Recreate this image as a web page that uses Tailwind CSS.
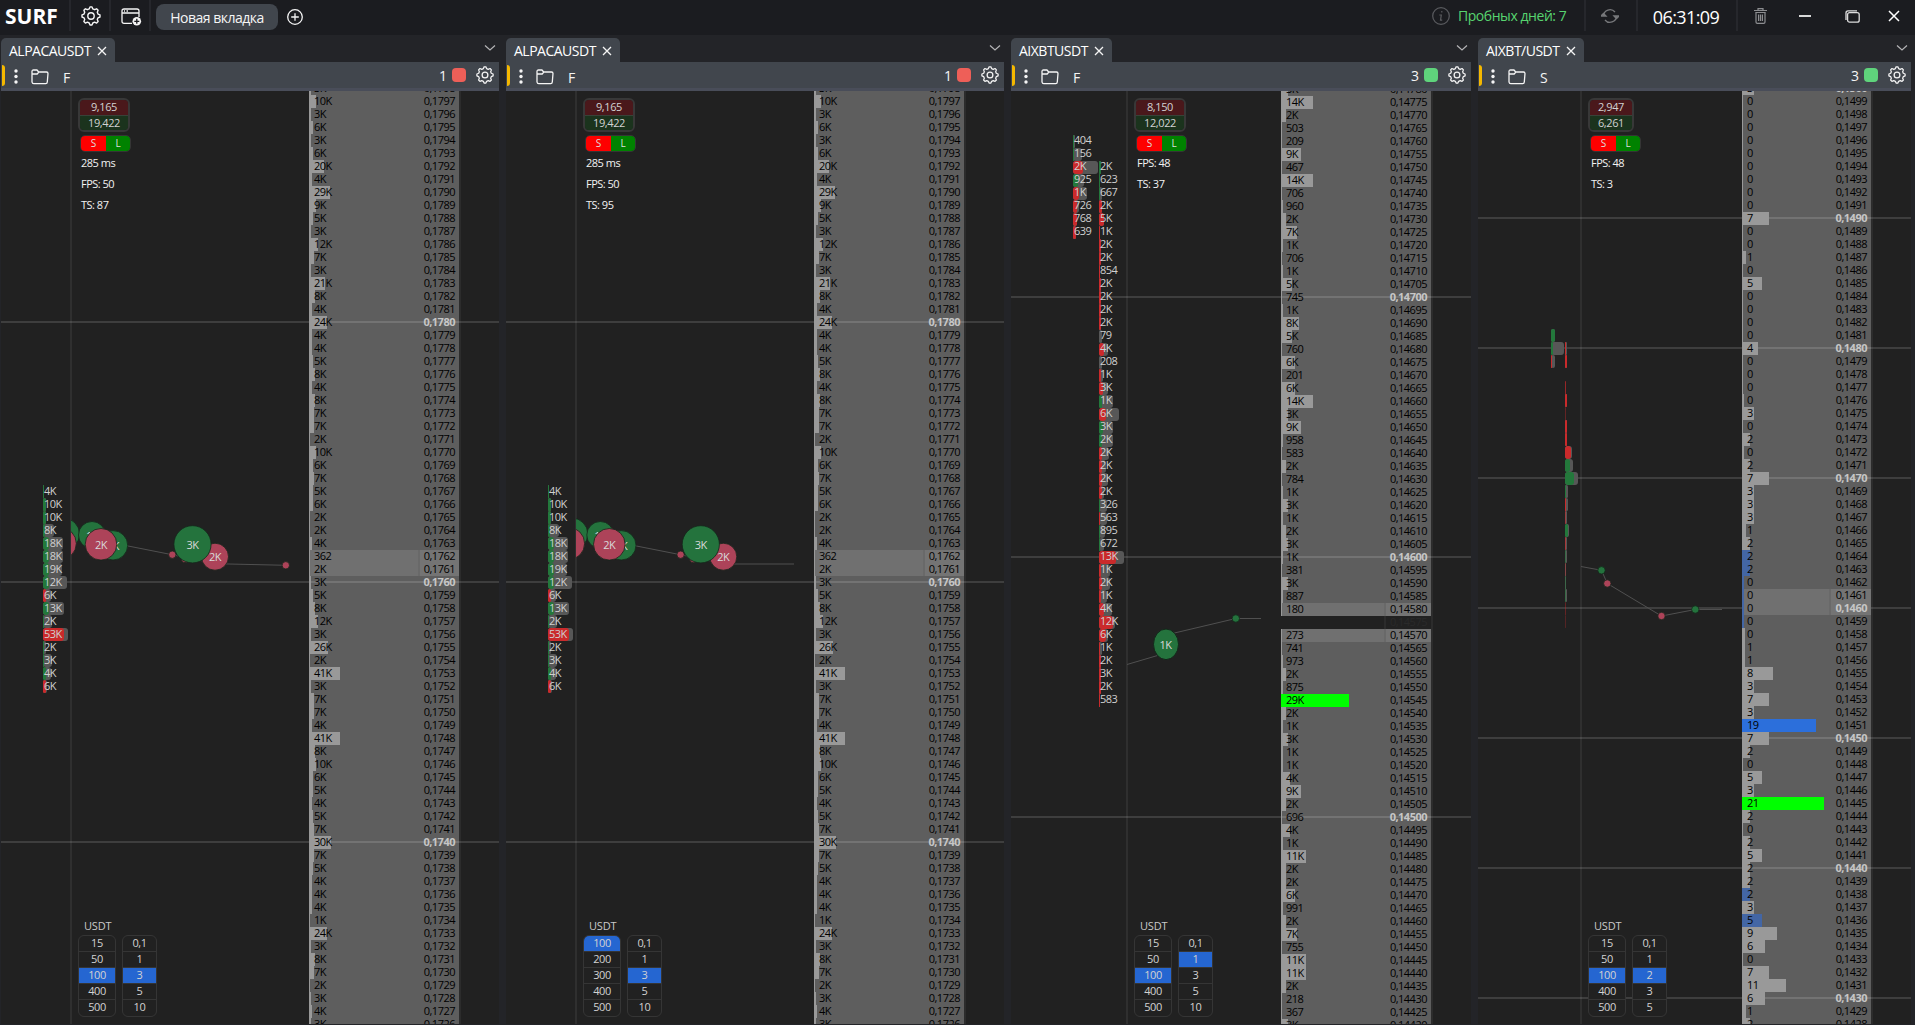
<!DOCTYPE html>
<html lang="ru">
<head>
<meta charset="utf-8">
<title>SURF</title>
<script src="https://cdn.jsdelivr.net/npm/@tailwindcss/browser@4"></script>
</head>
<body class="h-[1025px] w-[1915px] overflow-hidden bg-[#232428] font-['Open_Sans','Noto_Sans',sans-serif] text-[#f5f5f5]">
<svg class="hidden">
  <defs>
    <symbol id="gear" viewBox="0 0 20 20"><g fill="none" stroke="currentColor" stroke-width="1.4" stroke-linejoin="round"><path d="M8.2 2.9 9 .9h2l.8 2 1.8.8 2-.9 1.5 1.5-.8 2 .7 1.8 2 .8v2.1l-2 .8-.7 1.8.8 2-1.5 1.5-2-.9-1.8.8-.8 2H9l-.8-2-1.8-.8-2 .9-1.5-1.5.8-2-.7-1.8-2-.8V8.900l2-.8.7-1.800-.8-2 1.500-1.500 2 .9z"/><circle cx="10" cy="10" r="3.200"/></g></symbol>
    <symbol id="folder" viewBox="0 0 18 16"><path fill="none" stroke="currentColor" stroke-width="1.300" stroke-linejoin="round" d="M1 13V2.500Q1 1 2.500 1H6l1.700 2h7.800Q17 3 17 4.500L16.300 13q-.1 1.700-1.600 1.700H2.800Q1.200 14.700 1 13zM1.200 5h5l1.600-2"/></symbol>
    <symbol id="x" viewBox="0 0 10 10"><path d="M1 1l8 8M9 1L1 9" fill="none" stroke="currentColor" stroke-width="1.300"/></symbol>
    <symbol id="chev" viewBox="0 0 12 8"><path d="M1 1.500l5 4.500 5-4.500" fill="none" stroke="currentColor" stroke-width="1.200"/></symbol>
  </defs>
</svg>

<header class="flex h-[35px] items-start bg-[#1b1c20]">
  <div class="flex h-[31px] w-[71px] items-center border-r-2 border-[#26272c] pt-px pl-[5px]"><span class="text-[21px] leading-none font-bold text-white">SURF</span></div>
  <div class="flex h-[31px] w-10 items-center justify-center border-r-2 border-[#26272c] pt-px pl-0.5"><svg class="size-5"><use href="#gear"/></svg></div>
  <div class="flex h-[31px] w-10 items-center justify-center border-r-2 border-[#26272c] pt-[3px] pl-0.5">
    <svg class="h-[18px] w-[21px]" viewBox="0 0 21 18" fill="none" stroke="currentColor" stroke-width="1.300"><path d="M11 15.300H3Q1 15.300 1 13.300V3Q1 1 3 1h13q2 0 2 2v6M1 5h17M3 3h1M5.500 3H7"/><circle cx="15.800" cy="13.300" r="4.300" fill="#f5f5f5" stroke="none"/><path d="M15.800 10.800v5M13.300 13.300h5" stroke="#1b1c20"/></svg>
  </div>
  <button class="mt-1 ml-[5px] h-[26px] w-[122px] rounded-lg bg-[#41464d] pt-px text-center text-sm leading-none tracking-[-0.5px] whitespace-nowrap">Новая вкладка</button>
  <svg class="mt-[9px] ml-[9px] size-4" viewBox="0 0 16 16" fill="none" stroke="currentColor" stroke-width="1.300"><circle cx="8" cy="8" r="7.300"/><path d="M8 4.200v7.600M4.200 8h7.600"/></svg>
  <div class="flex-1"></div>
  <div class="flex h-[31px] w-[154px] items-center gap-[8px] border-r-2 border-[#26272c] pt-px text-sm whitespace-nowrap text-[#57d46f]">
    <svg class="size-[18px] shrink-0 text-[#5a5b5f]" viewBox="0 0 18 18" fill="none" stroke="currentColor" stroke-width="1.200"><circle cx="9" cy="9" r="8.300"/><path d="M9.800 4v1.600M7.300 8h2L8.500 13.200h1.700"/></svg>
    <span class="tracking-[-0.45px]">Пробных дней: 7</span>
  </div>
  <div class="flex h-[31px] w-[52px] items-center justify-center border-r-2 border-[#26272c] pt-px pr-0.5 text-[#77787b]">
    <svg class="h-4 w-[18px]" viewBox="0 0 18 16" fill="none" stroke="currentColor" stroke-width="1.300"><path d="M2.500 8.500V8a6.500 6.500 0 0 1 11.500-4M15.500 7.500V8A6.500 6.500 0 0 1 4 12M0 8l2.500-2.500L5 8zM13 8l2.500 2.500L18 8z"/></svg>
  </div>
  <div class="flex h-[31px] w-[100px] items-center justify-center border-r-2 border-[#26272c] pt-0.5 pr-0.5 text-lg leading-none tracking-[-0.6px] text-white">06:31:09</div>
  <div class="flex h-[31px] w-[177px] items-center pt-px pl-[16px]">
    <svg class="h-4 w-[13px] text-[#8c8d90]" viewBox="0 0 13 16" fill="none" stroke="currentColor" stroke-width="1.200"><path d="M0 2.500h13M4 2V.7h5V2M1.300 4.500h10.400M2 4.500V14q0 1.300 1.300 1.300h6.400Q11 15.300 11 14V4.500M4.600 6.500v6.500M6.500 6.500v6.500M8.400 6.500v6.500"/></svg>
    <div class="ml-8 h-0.5 w-3 bg-[#d8d8d8]"></div>
    <svg class="ml-[34px] h-[13px] w-[15px]" viewBox="0 0 15 13" fill="none" stroke="#dcdcdc" stroke-width="1.300"><rect x="2.600" y="2.600" width="11.600" height="9.600" rx="2"/><path d="M1 10V3Q1 .8 3 .8h9"/></svg>
    <svg class="ml-[28px] size-3 text-white" viewBox="0 0 12 12"><path d="M1 1l10 10M11 1L1 11" fill="none" stroke="currentColor" stroke-width="1.500"/></svg>
  </div>
</header>

<main id="panels" class="flex h-[990px] gap-[7px] pl-px"></main>

<script>
const K = s => s.split(' ');
const alpacaVol = K('3K 10K 3K 6K 3K 6K 20K 4K 29K 9K 5K 3K 12K 7K 3K 21K 8K 4K 24K 4K 4K 5K 8K 4K 8K 7K 7K 2K 10K 6K 7K 5K 6K 2K 2K 4K 362 2K 3K 5K 8K 12K 3K 26K 2K 41K 3K 7K 7K 4K 41K 8K 10K 6K 5K 4K 5K 7K 30K 7K 5K 4K 4K 4K 1K 24K 3K 8K 7K 2K 3K 4K 3K');
const aixFut = K('3K 14K 2K 503 209 9K 467 14K 706 960 2K 7K 1K 706 1K 5K 745 1K 8K 5K 760 6K 201 6K 14K 3K 9K 958 583 2K 784 1K 3K 1K 2K 3K 1K 381 3K 887 180 - 273 741 973 2K 875 29K 2K 1K 3K 1K 1K 4K 9K 2K 696 4K 1K 11K 2K 2K 6K 991 2K 7K 755 11K 11K 2K 218 367 3K');
const aixSpot = K('3 0 0 0 0 0 0 0 0 0 7 0 0 1 0 5 0 0 0 0 4 0 0 0 0 3 0 2 0 2 7 3 3 3 1 2 2 2 0 0 0 0 0 1 1 8 3 7 3 19 7 2 0 5 3 21 2 0 2 5 2 2 2 3 5 9 6 0 7 11 6 1 2');

// cluster rows: label|side|traded width|total width
const alpacaCluster = [{left:42, row:31, rows:K('4K|g|1|1 10K|g|3|3 10K|g|3|3 8K|g|2|11 18K|g|6|20 18K|g|6|20 19K|g|6|19 12K|g|6|24 6K|r|3|8 13K|g|6|21 2K|g|1|9 53K|r|21|25 2K|g|1|3 3K|g|1|9 4K|g|3|8 6K|r|3|4')}];
const futCluster = [
  {left:62, row:4, rows:K('404|g|1|2 156|g|1|9 2K|r|10|25 925|g|5|11 1K|r|6|14 726|r|4|6 768|r|4|4 639|r|3|3')},
  {left:88, row:6, rows:K('2K|g|2|2 623|g|1|1 667|g|1|3 2K|r|3|3 5K|r|5|5 1K|r|1|1 2K|r|2|2 2K|r|2|2 854|r|1|1 2K|r|2|2 2K|r|2|2 2K|r|2|2 2K|r|2|2 79|g|0|3 4K|r|5|9 208|g|0|3 1K|r|2|4 3K|r|4|9 1K|g|3|14 6K|r|7|20 3K|g|4|14 2K|g|3|14 2K|r|3|10 2K|r|3|7 2K|r|3|9 2K|r|3|5 326|g|1|8 563|r|1|8 895|g|1|6 672|g|1|5 13K|r|17|25 1K|r|2|11 2K|r|3|11 1K|r|2|8 4K|r|5|13 12K|r|14|16 6K|r|7|9 1K|r|1|3 2K|r|2|2 3K|r|2|2 2K|r|2|2 583|r|1|1')}];
const spotCluster = [
  {left:73, row:19, rows:K('|g|4|4 |g|2|13 |r|1|4')},
  {left:87, row:20, rows:K('|r|1|2 |r|2|2 |r|0|0 |r|0.7|0.7 |r|1.6|1.6 |r|0.4|0.7 |r|2|2 |r|1.5|2 |r|6|7 |g|5|8 |g|9|13 |g|1|3 |r|1|3 |r|0.6|2 |g|3|4 |r|0.7|2 |g|0.6|2 |r|0.4|1 |g|0.5|1 |g|0.6|2 |r|0.4|0.4 |r|0.3|0.3')}];

const G = '#24733d', R = '#ad4359';
const alpacaDots = (dx, tail) => {
  const c = (x,y,r,f,t='') => `<circle cx="${x+dx}" cy="${y}" r="${r}" fill="${f}" stroke="#14261a" stroke-width=".8"/>` + (t ? label(x+dx,y+1,t) : '');
  return `<path d="M${113+dx} 543L${172+dx} 554.7L${215+dx} 563.500" fill="none" stroke="#505050"/>` + tail +
    c(63.500,534,16,G) + c(60,543.500,16.300,R) + c(92,535,13.500,G,'1K') + c(113,545.300,14.700,G,'2K') + c(101,544.300,15.800,R,'2K') +
    c(172.300,554.700,3.700,R) + c(185,559,3.700,R) + c(215,556.700,13.500,R,'2K') + c(192.500,544.300,18.600,G,'3K');
};
function label(x,y,t){return `<text x="${x}" y="${y+3.500}" text-anchor="middle" fill="#d9d9d9" font-size="11">${t}</text>`}
const dot = (x,y,f) => `<circle cx="${x}" cy="${y}" r="3.700" fill="${f}" stroke="#14261a" stroke-width=".8"/>`;

const panels = [
  {x:1,w:498,tab:'ALPACAUSDT',tabW:114,kind:'F',n:1,led:'#ee5f58',sep:69,pad:8,lad:150,pc:39,top:-9,base:1798,step:1,dec:4,vol:alpacaVol,k:.74,fix:{41:30},best:[36,37],cl:alpacaCluster,clLead:'leading-[12px]',asks:['9,165','19,422'],pillW:51,info:['285 ms','FPS: 50','TS: 87'],a:['15','50','100','400','500'],as:2,b:['0,1','1','3','5','10'],bs:2,
   dots:alpacaDots(0,'<path d="M215 563.700L286 565.300" stroke="#505050"/>'+dot(285.800,565.300,R))},
  {x:506,w:498,tab:'ALPACAUSDT',tabW:114,kind:'F',n:1,led:'#ee5f58',sep:69,pad:8,lad:150,pc:39,top:-9,base:1798,step:1,dec:4,vol:alpacaVol,k:.74,fix:{41:30},best:[36,37],cl:alpacaCluster,clLead:'leading-[12px]',asks:['9,165','19,422'],pillW:51,info:['285 ms','FPS: 50','TS: 95'],a:['100','200','300','400','500'],as:0,b:['0,1','1','3','5','10'],bs:2,
   dots:alpacaDots(508.300,'<path d="M723 564H794" stroke="#404040" stroke-width="1.500"/>')},
  {x:1011,w:460,tab:'AIXBTUSDT',tabW:101,kind:'F',n:3,led:'#5fd47c',sep:115,pad:8,lad:150,pc:45,top:-8,base:14780,step:5,dec:5,vol:aixFut,k:2.25,fix:{29:67},best:[40,42],cl:futCluster,clLead:'leading-[10px]',asks:['8,150','12,022'],pillW:51,info:['FPS: 48','TS: 37'],a:['15','50','100','400','500'],as:2,b:['0,1','1','3','5','10'],bs:1,
   dots:`<path d="M1127 664.500L1166 653M1166 635L1235.800 618.500H1261" fill="none" stroke="#505050"/><ellipse cx="1166" cy="644.300" rx="12.500" ry="15.300" fill="${G}" stroke="#14261a"/>`+label(1165.500,645.500,'1K')+dot(1235.800,618.500,G)},
  {x:1478,w:433,tab:'AIXBT/USDT',tabW:106,kind:'S',n:3,led:'#5fd47c',sep:102,pad:8,lad:129,pc:40,top:-9,base:1500,step:1,dec:4,vol:aixSpot,k:3.9,fix:{11:43},best:[39,40],cl:spotCluster,clLead:'leading-[12px]',asks:['2,947','6,261'],pillW:45,info:['FPS: 48','TS: 3'],a:['15','50','100','400','500'],as:2,b:['0,1','1','2','3','5'],bs:2,
   dots:'<path d="M1581 566.500L1601.500 570.300L1607.300 583.500L1661.500 616L1695.300 609.500H1722" fill="none" stroke="#505050"/>'+dot(1601.500,570.300,G)+dot(1607.300,583.500,R)+dot(1661.500,616,R)+dot(1695.300,609.500,G)},
];

function barColor(p, v, i) {
  if (v === '29K' && p.kind === 'F' && p.n === 3 || v === '21' && p.kind === 'S') return '#00ff00';
  if (p.kind === 'S') {
    if (v === '19') return '#2c6fdb';
    if ([36,37,38,39,40,41,62,64].includes(i)) return '#4366a5';
  }
  return '#999999';
}
function ladder(p) {
  return p.vol.map((v, i) => {
    const price = p.base - i * p.step, round = price % (p.step * (p.kind === 'S' ? 10 : 20)) === 0;
    const txt = '0,' + String(price).padStart(p.dec, '0');
    if (v === '-') return `<div class="flex h-[13px] shrink-0 bg-[#212121]"><div class="flex-1"></div><div class="w-[47px] border-l-2 border-[#2b2b2b] pr-1 text-right text-[#2a2a2a]">${txt}</div></div>`;
    const num = parseFloat(v), big = v.endsWith('K') || p.kind === 'S';
    let w = big ? (p.fix[num] ?? Math.max(0, Math.round(num * p.k - 1))) : num > 850 ? 1 : 0;
    if (p.kind === 'S' && [24,28,38,39,40,41,42,43,44].includes(i)) w = i > 41 ? 2 : 1;
    const best = p.best.includes(i);
    return `<div class="relative flex h-[13px] shrink-0 ${best ? 'bg-[#707070]' : ''}">
      <div class="absolute inset-y-0 left-0" style="width:${w + 1}px;background:${barColor(p, v, i)}"></div>
      <div class="relative flex-1 pl-[5px]">${v}</div>
      ${best ? '<div class="w-0.5 bg-[#696969]"></div>' : ''}
      <div class="relative pr-1 text-right ${round ? 'font-bold text-[#c6c6c6]' : ''} ${best ? 'bg-[#747474]' : ''}" style="width:${p.pc}px">${txt}</div></div>`;
  }).join('');
}
function grid(p) {
  return p.vol.map((v, i) => (p.base - i * p.step) % (p.step * (p.kind === 'S' ? 10 : 20)) === 0 && i
    ? `<div class="absolute inset-x-0 h-0.5 bg-white/13" style="top:${p.top + i * 13 + 5}px"></div>` : '').join('');
}
function cluster(p, c) {
  return `<div class="absolute flex flex-col ${p.clLead}" style="left:${c.left}px;top:${p.top + c.row * 13}px">` + c.rows.map(r => {
    const [t, s, w, g] = r.split('|');
    return `<div class="relative h-[13px]"><div class="absolute inset-y-0 left-0 rounded-[3px] bg-[#575757]" style="width:${g < 1 ? 0 : g}px"></div><div class="absolute inset-y-0 left-0 rounded-[3px] ${s === 'g' ? 'bg-[#23783b]' : 'bg-[#ca2a2b]'}" style="width:${w > 0 && w < 1 ? 1 : w}px;opacity:${Math.min(1, w)}"></div><div class="relative pl-px text-[#d0d0d0]">${t}</div></div>`;
  }).join('') + '</div>';
}
function picker(items, sel, w) {
  return `<div class="h-[82px] overflow-hidden rounded-md border border-[#353535] bg-[#212121]" style="width:${w}px">` + items.map((t, i) =>
    `<div class="h-4 border-[#353535] text-center text-[11px] leading-[14px] tracking-[-0.4px] ${i === 4 ? '' : 'border-b'} ${i === sel ? 'bg-[#2566d1]' : ''}">${t}</div>`).join('') + '</div>';
}

document.getElementById('panels').innerHTML = panels.map(p => `
<section class="flex h-full shrink-0 flex-col" style="width:${p.w}px">
  <div class="flex h-[27px] items-end justify-between">
    <div class="flex h-6 items-center rounded-t-[5px] bg-[#41464d] pl-2" style="width:${p.tabW}px">
      <span class="flex-1 pt-px text-sm leading-none tracking-[-0.5px] whitespace-nowrap text-white">${p.tab}</span>
      <svg class="mt-0.5 mr-2 size-[10px]"><use href="#x"/></svg>
    </div>
    <svg class="mr-[3px] mb-[10px] h-2 w-3 text-[#b4b4b6]"><use href="#chev"/></svg>
  </div>
  <div class="flex h-[29px] items-start border-b-3 border-[#494d59] bg-[#41464d]">
    <div class="mt-[3px] ml-px h-[21px] w-[3px] rounded-r-sm bg-[#f5b800]"></div>
    <svg class="mt-[7px] ml-[9px] h-[15px] w-[4px]" viewBox="0 0 4 15" fill="#f5f5f5"><circle cx="2" cy="2" r="1.700"/><circle cx="2" cy="7.500" r="1.700"/><circle cx="2" cy="13" r="1.700"/></svg>
    <svg class="mt-[7px] ml-[13px] h-4 w-[18px]"><use href="#folder"/></svg>
    <span class="mt-[9px] ml-[14px] text-sm leading-none">${p.kind}</span>
    <span class="mt-[7px] ml-auto text-sm leading-none">${p.n}</span>
    <div class="mt-1.5 ml-[5px] size-[14px] rounded-[4px]" style="background:${p.led}"></div>
    <svg class="mt-1 mr-[5px] ml-[10px] size-[18px]"><use href="#gear"/></svg>
  </div>
  <div class="relative flex h-[933px] overflow-hidden bg-[#212121] text-[11px] leading-[12px] tracking-[-0.5px]">
    <div class="h-full shrink-0" style="width:${p.sep}px"></div>
    <div class="h-full w-0.5 shrink-0 bg-[#2f2f2f]"></div>
    <div class="h-full flex-1"></div>
    <div class="h-full shrink-0 bg-[#5e5e5e]" style="width:${p.lad}px"></div>
    <div class="h-full w-[40px] shrink-0 border-l-2 border-[#2c2c2c]"></div>
    ${grid(p)}
    <div class="absolute right-[40px] flex flex-col text-black" style="width:${p.lad}px;top:${p.top}px">${ladder(p)}</div>
    <svg class="absolute top-0" style="left:${p.sep + 1}px;width:${p.w - p.sep - p.lad - 41}px;height:933px" viewBox="${p.x + p.sep + 1} 91 ${p.w - p.sep - p.lad - 41} 933">${p.dots}</svg>
    ${p.cl.map(c => cluster(p, c)).join('')}
    <div class="absolute inset-y-0 flex flex-col pt-[7px]" style="left:${p.sep + p.pad}px">
      <div class="h-[34px] overflow-hidden rounded-md border-2 border-[#383838] text-center text-[11px] leading-[13px] tracking-[-0.4px] text-[#d2d2d2]" style="width:${p.pillW + 1}px"><div class="h-[15px] bg-[#4a181b]">${p.asks[0]}</div><div class="h-[16px] border-t border-[#384238] bg-[#1b331d]">${p.asks[1]}</div></div>
      <div class="mt-[3px] ml-[2px] flex h-[17px] w-[51px] overflow-hidden rounded-[5px] border border-[#353535] text-center text-[10px] leading-[15px] text-[#dddddd]"><div class="flex-1 bg-[#fe0000]">S</div><div class="flex-1 bg-[#008200]">L</div></div>
      <div class="ml-[3px] text-[11px] leading-[21px] tracking-[-0.5px] text-[#f2f2f2]">${p.info.map(t => `<div>${t}</div>`).join('')}</div>
      <div class="mt-auto mb-[2px] ml-[6px] text-[11px] leading-[14px] tracking-[-0.2px] text-[#c9c9c9]">USDT</div>
      <div class="mb-[7px] flex gap-[6px] text-[#d2d2d2]">${picker(p.a, p.as, 38)}${picker(p.b, p.bs, 35)}</div>
    </div>
  </div>
</section>`).join('');
</script>
</body>
</html>
